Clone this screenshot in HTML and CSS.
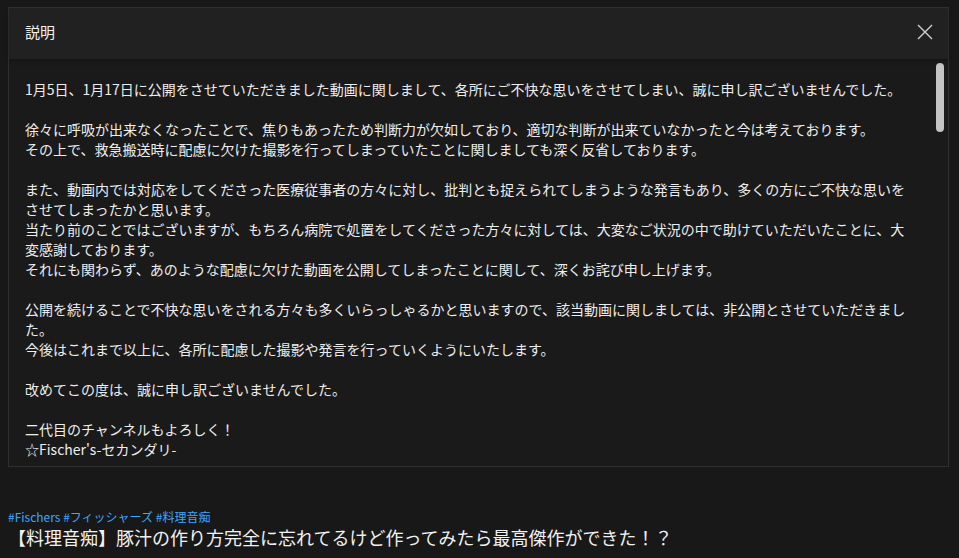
FILE: index.html
```html
<!DOCTYPE html>
<html lang="ja">
<head>
<meta charset="utf-8">
<link rel="stylesheet" href="styles.css">
</head>
<body>
<section class="panel">
  <header class="panel-head">
    <h2 class="panel-title">説明</h2>
    <button class="close" aria-label="閉じる">
      <svg width="18" height="18" viewBox="0 0 18 18"><path d="M2 2 L16 16 M16 2 L2 16" stroke="#d0d0d0" stroke-width="1.4" fill="none"/></svg>
    </button>
  </header>
  <div class="panel-body">
    <div class="desc">
      <p>1月5日、1月17日に公開をさせていただきました動画に関しまして、各所にご不快な思いをさせてしまい、誠に申し訳ございませんでした。</p>
      <p>徐々に呼吸が出来なくなったことで、焦りもあったため判断力が欠如しており、適切な判断が出来ていなかったと今は考えております。<br>その上で、救急搬送時に配慮に欠けた撮影を行ってしまっていたことに関しましても深く反省しております。</p>
      <p>また、動画内では対応をしてくださった医療従事者の方々に対し、批判とも捉えられてしまうような発言もあり、多くの方にご不快な思いを<br>させてしまったかと思います。<br>当たり前のことではございますが、もちろん病院で処置をしてくださった方々に対しては、大変なご状況の中で助けていただいたことに、大<br>変感謝しております。<br>それにも関わらず、あのような配慮に欠けた動画を公開してしまったことに関して、深くお詫び申し上げます。</p>
      <p>公開を続けることで不快な思いをされる方々も多くいらっしゃるかと思いますので、該当動画に関しましては、非公開とさせていただきまし<br>た。<br>今後はこれまで以上に、各所に配慮した撮影や発言を行っていくようにいたします。</p>
      <p>改めてこの度は、誠に申し訳ございませんでした。</p>
      <p>二代目のチャンネルもよろしく！<br>☆Fischer's-セカンダリ-</p>
    </div>
    <div class="scroll-thumb"></div>
  </div>
</section>
<div class="video-info">
  <div class="tags"><a href="#">#Fischers</a> <a href="#">#フィッシャーズ</a> <a href="#">#料理音痴</a></div>
  <h1 class="video-title">【料理音痴】豚汁の作り方完全に忘れてるけど作ってみたら最高傑作ができた！？</h1>
</div>
</body>
</html>
```
FILE: styles.css
```css
html, body {
  margin: 0;
  padding: 0;
  background: #181818;
  font-family: "Noto Sans CJK JP", "Noto Sans", Roboto, sans-serif;
  color: #f1f1f1;
  width: 959px;
  height: 558px;
  overflow: hidden;
}
.panel {
  margin: 7px 10px 0 8px;
  height: 460px;
  border: 1px solid #303030;
  box-sizing: border-box;
  background: #1a1a1a;
  display: flex;
  flex-direction: column;
}
.panel-head {
  height: 51px;
  flex: none;
  background: #212121;
  display: flex;
  align-items: center;
  justify-content: space-between;
  padding: 0 14px 0 16px;
  box-shadow: 0 2px 4px rgba(0,0,0,0.25);
  position: relative;
  z-index: 1;
}
.panel-title {
  margin: 0;
  font-size: 15px;
  font-weight: 400;
  color: #f1f1f1;
  line-height: 20px;
  padding-bottom: 4px;
}
.close {
  background: none;
  border: 0;
  padding: 0;
  width: 18px;
  height: 18px;
  display: flex;
  cursor: pointer;
  margin-bottom: 3px;
}
.panel-body {
  flex: 1;
  position: relative;
  overflow: hidden;
  padding: 20px 30px 0 16px;
}
.desc p {
  margin: 0 0 20px;
  font-size: 14px;
  line-height: 20px;
  color: #ededed;
  white-space: nowrap;
}
.scroll-thumb {
  position: absolute;
  right: 4px;
  top: 4px;
  width: 8px;
  height: 69px;
  border-radius: 4px;
  background: #c4c4c4;
}
.video-info {
  padding: 42px 8px 0 8px;
}
.tags {
  font-size: 12px;
  line-height: 16px;
}
.tags a {
  color: #3ea6ff;
  text-decoration: none;
}
.video-title {
  margin: 0;
  font-size: 18px;
  font-weight: 400;
  line-height: 24px;
  color: #f1f1f1;
}
```
